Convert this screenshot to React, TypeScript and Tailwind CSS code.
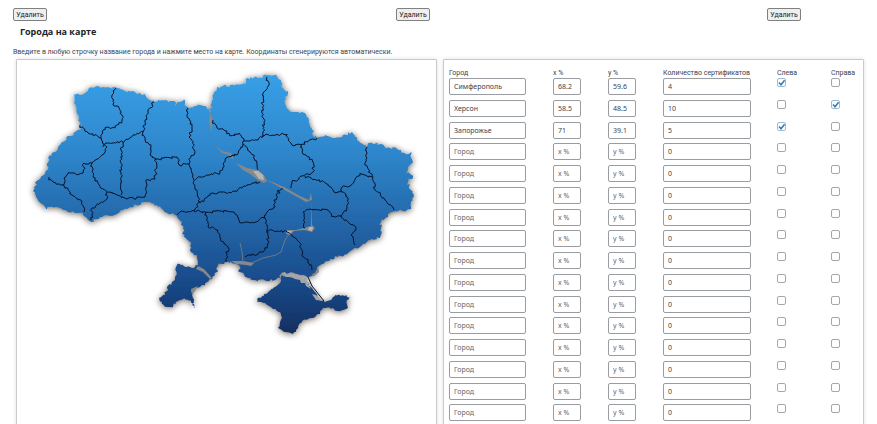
import React from "react";

type Point = [number, number];

const parse = (s: string): Point[] =>
  s
    .trim()
    .split(/\s+/)
    .map((p) => p.split(",").map(Number) as Point);

/* Adds small irregular steps to a coarse line so that borders and coasts look natural. */
function rough(source: string, amount: number, closed = false): string {
  const pts = parse(source);
  if (closed) pts.push(pts[0]);
  let seed = 7;
  const rand = () => {
    seed = (seed * 16807) % 2147483647;
    return seed / 2147483647 - 0.5;
  };
  const out: Point[] = [pts[0]];
  for (let i = 1; i < pts.length; i++) {
    const [x0, y0] = pts[i - 1];
    const [x1, y1] = pts[i];
    const steps = Math.max(1, Math.round(Math.hypot(x1 - x0, y1 - y0) / 2));
    for (let k = 1; k < steps; k++) {
      const t = k / steps;
      out.push([
        x0 + (x1 - x0) * t + rand() * amount,
        y0 + (y1 - y0) * t + rand() * amount,
      ]);
    }
    out.push([x1, y1]);
  }
  const d = out.map(([x, y]) => `${x.toFixed(1)},${y.toFixed(1)}`).join("L");
  return `M${d}${closed ? "Z" : ""}`;
}

const MAINLAND =
  "74,93 77,94 80,95 85,93 89,88 95,87 107,87 117,88 125,91 135,92 137,94 144,94 147,98 150,100 155,102 158,100 165,100 168,102 175,101 176,106 180,102 185,100 186,106 193,108 197,106 205,106 207,109 211,112 212,102 214,93 218,87 230,85 245,84 247,78 250,77 258,78 267,75 277,76 281,80 283,88 288,94 285,97 287,109 293,112 305,113 309,120 312,130 314,137 325,135 333,138 343,135 352,132 357,140 366,147 369,143 380,144 387,148 397,149 405,154 411,152 413,162 408,167 406,173 413,176 413,178 407,178 409,187 414,195 411,209 392,212 388,217 381,222 380,238 372,239 363,244 355,248 348,253 338,257 330,259 322,264 317,268 316,273 312,276 307,277 297,274 282,273 280,278 267,281 253,280 246,277 243,273 238,271 241,269 239,265 232,263 225,262 218,265 217,272 212,279 202,285 192,290 193,298 194,308 191,302 187,299 178,301 170,307 162,304 159,298 165,295 167,288 175,280 176,267 180,264 187,267 195,267 198,265 197,257 190,249 190,242 182,235 184,237 182,222 177,216 167,213 157,205 148,202 137,205 127,209 117,214 100,217 91,222 83,213 75,213 63,210 53,207 47,209 38,200 33,191 38,180 45,173 48,170 48,158 60,145 70,136 81,128 78,115 74,103";

const CRIMEA =
  "282,275 280,283 268,292 257,299 257,302 265,303 273,309 280,312 282,318 278,328 285,332 293,334 298,328 302,321 310,318 320,314 323,308 333,308 338,311 348,308 347,300 351,297 342,295 335,295 332,299 325,302 318,299 315,292 312,288 309,286 308,282 305,282 302,279 297,279 293,277 288,277";

const REGION_BORDERS = [
  "116,88 112,95 113,105 117,106 122,115 122,120 115,128 108,127 102,132 101,138 103,144 107,147 102,155 92,163 84,163 83,173 68,174 64,178 64,186",
  "80,125 88,133 101,138",
  "49,177 53,182 64,186 72,195 82,202 84,212",
  "92,163 93,177 100,187 108,192 117,195 127,199 145,197 146,180 155,179 156,159",
  "107,192 107,199 92,208 91,220",
  "103,147 107,143 123,142 121,150 121,167 121,195",
  "123,143 133,135 143,132 145,120 148,112 154,102",
  "143,132 145,140 151,147 150,155 156,159 177,157 179,165 189,164",
  "188,108 187,115 192,127 189,137 193,142 194,155 189,159 189,164 193,175 193,183 200,202 194,211",
  "195,179 207,175 220,173 225,160 232,155 237,155 243,144",
  "213,120 217,128 223,129 230,136 239,133 244,141 243,144 250,152 257,163 258,170",
  "267,77 269,85 263,93 262,113 264,122 263,135 258,140 244,141",
  "263,135 278,135 287,134 288,140 293,146 302,144 317,138",
  "260,182 253,183 247,185 232,192 213,193 200,203",
  "177,215 180,212 194,211 205,212 227,211 237,215 240,223 257,222 265,215 275,207 274,200 280,193 277,191 283,189",
  "206,212 208,227 218,230 220,240 228,247 226,262",
  "265,215 267,230 268,243 263,252 245,257",
  "267,230 287,232 292,235 300,243 302,255 312,267 312,270",
  "305,228 303,212 310,209 328,210 332,217 341,217 356,228 351,235 355,245",
  "302,144 302,152 313,162 313,172 305,175 292,182 291,188",
  "305,176 328,184 335,193 343,192 348,198 347,208 341,217",
  "342,191 342,187 350,186 360,173 373,178 375,190 385,200 394,210",
  "367,147 365,165 373,177",
];

const LAKES = [
  "M210,111 L213,120 L211,132 L209,120 Z",
  "M215,145 L222,151 L231,153 L234,159 L231,158 L229,155 L222,153 Z",
  "M236,163 L247,168 L258,170 L264,175 L267,181 L264,183 L258,180 L250,174 L243,170 Z",
  "M265,179 L284,187 L300,196 L309,200 L311,193 L312,200 L306,202 L299,198 L283,189 Z",
  "M311,200 L312,225 L315,228 L312,232 L304,230 L294,231 L290,235 L286,234 L287,230 L296,230 L304,228 L311,226 Z",
  "M231,261 L243,261 L254,263 L251,266 L246,265 L236,264 Z",
  "M318,266 L319,272 L314,276 L311,275 L316,272 Z",
  "M198,266 L204,269 L212,278 L210,279 L203,272 L196,269 Z",
  "M191,289 L198,286 L195,291 L192,295 Z",
];

const LAGOONS =
  "M281,273 L285,272 L287,275 L290,273 L293,276 L296,274 L298,277 L301,275 L302,279 L307,277 L307,281 L311,284 L308,284 L311,289 L306,286 L305,283 L301,283 L300,280 L295,279 L291,277 L286,277 Z M312,294 L316,295 L323,301 L316,300 Z";

function CountryMap() {
  return (
    <svg
      viewBox="0 0 419 289"
      className="block w-full"
      role="img"
      aria-label="Карта"
    >
      <defs>
        <linearGradient
          id="land"
          gradientUnits="userSpaceOnUse"
          x1="0"
          y1="76"
          x2="0"
          y2="333"
        >
          <stop offset="0" stopColor="#389fe6" />
          <stop offset="0.3" stopColor="#2e86cb" />
          <stop offset="0.6" stopColor="#2263a5" />
          <stop offset="0.8" stopColor="#194a8a" />
          <stop offset="1" stopColor="#112f60" />
        </linearGradient>
        <filter id="shade" x="-10%" y="-10%" width="120%" height="120%">
          <feDropShadow
            dx="0"
            dy="1"
            stdDeviation="3"
            floodColor="#2a1a10"
            floodOpacity="0.7"
          />
        </filter>
      </defs>
      <g transform="translate(-17 -60)">
        <g filter="url(#shade)" fill="url(#land)">
          <path d={rough(MAINLAND, 3, true)} />
          <path d={rough(CRIMEA, 2, true)} />
        </g>
        <g fill="#85898c">
          {LAKES.map((d) => (
            <path key={d} d={d} />
          ))}
        </g>
        <path d={LAGOONS} fill="#a3a5a8" />
        <g fill="#b5b5b5">
          <path d="M253,171 L258,171 L263,175 L264,180 L259,179 Z" />
          <path d="M309,227 L313,227 L312,231 L308,230 Z" />
          <path d="M287,231 L292,231 L290,234 L287,233 Z" />
        </g>
        <g fill="none" stroke="#70787f">
          <path d="M289,234 L285,240 L281,252 L276,255 L263,258 L252,263" />
          <path d="M243,262 L242,252 L240,243" />
        </g>
        <g
          fill="none"
          stroke="#06122a"
          strokeLinejoin="round"
        >
          {REGION_BORDERS.map((line) => (
            <path key={line} d={rough(line, 3)} />
          ))}
          <path d="M308,277 L312,286 L324,301" />
        </g>
      </g>
    </svg>
  );
}

type City = {
  name?: string;
  x?: string;
  y?: string;
  count?: string;
  left?: boolean;
  right?: boolean;
};

const CITIES: City[] = [
  { name: "Симферополь", x: "68.2", y: "59.6", count: "4", left: true },
  { name: "Херсон", x: "58.5", y: "48.5", count: "10", right: true },
  { name: "Запорожье", x: "71", y: "39.1", count: "5", left: true },
  ...Array.from({ length: 13 }, () => ({})),
];

function Field({
  label,
  value,
  placeholder,
  className,
}: {
  label: string;
  value?: string;
  placeholder?: string;
  className: string;
}) {
  return (
    <input
      type="text"
      aria-label={label}
      defaultValue={value}
      placeholder={placeholder}
      className={`block h-[17px] rounded-[2px] border border-[#999ca0] bg-white px-1 font-['Noto_Sans','Open_Sans',sans-serif] text-[7px] leading-[15px] text-[#3c434a] placeholder:text-[#646970] placeholder:opacity-100 ${className}`}
    />
  );
}

function Tick({ label, checked }: { label: string; checked?: boolean }) {
  return (
    <span className="relative block size-[9px]">
      <input
        type="checkbox"
        aria-label={label}
        defaultChecked={checked}
        className="peer block size-[9px] appearance-none rounded-[2px] border border-[#a4a7ab] bg-white checked:border-[#9cbcd6]"
      />
      <svg
        viewBox="0 0 9 9"
        className="pointer-events-none absolute inset-0 hidden size-[9px] peer-checked:block"
        aria-hidden="true"
      >
        <path
          d="M2 4.6 L4 6.8 L7.6 2.2"
          fill="none"
          stroke="#2f78b7"
          strokeWidth="1.5"
        />
      </svg>
    </span>
  );
}

function DeleteButton() {
  return (
    <button
      type="button"
      className="flex h-[13px] w-[34px] items-center justify-center rounded-[2px] border border-[#808080] bg-[#efefef] pt-px text-[7px] leading-none text-[#1a1a1a]"
    >
      Удалить
    </button>
  );
}

const PANEL =
  "min-w-0 rounded-[1px] border border-[#c9cacc] bg-white shadow-[0_0_4px_rgba(0,0,0,0.12)]";

export default function App() {
  return (
    <main className="flex h-screen flex-col overflow-hidden bg-white pt-2 font-[Roboto,'Noto_Sans',sans-serif] text-[7px] leading-[9px] text-[#3c434a]">
      <div className="grid shrink-0 grid-cols-[383fr_371fr_110fr] pl-[13px]">
        <DeleteButton />
        <DeleteButton />
        <DeleteButton />
      </div>
      <h1 className="mt-1 pl-5 font-['Open_Sans','Noto_Sans',sans-serif] text-[9px] leading-[14px] font-bold text-[#1d2327]">
        Города на карте
      </h1>
      <p className="mt-[9px] mb-0.5 pl-[13px]">
        Введите в любую строчку название города и нажмите место на карте.
        Координаты сгенерируются автоматически.
      </p>
      <div className="grid min-h-0 flex-1 grid-cols-2 gap-1.5 pr-[13px] pl-4">
        <section className={`${PANEL} -mb-4`}>
          <CountryMap />
        </section>
        <section className={`${PANEL} -mb-4 pt-[9px] pl-[5px]`}>
          <table className="h-[357px] w-full table-fixed border-collapse text-left">
            <colgroup>
              <col className="w-[104px]" />
              <col className="w-[55px]" />
              <col className="w-[55px]" />
              <col className="w-[114px]" />
              <col className="w-[54px]" />
              <col />
            </colgroup>
            <thead>
              <tr className="h-[9px] whitespace-nowrap">
                {[
                  "Город",
                  "x %",
                  "y %",
                  "Количество сертификатов",
                  "Слева",
                  "Справа",
                ].map((title) => (
                  <th key={title} scope="col" className="p-0 font-normal">
                    {title}
                  </th>
                ))}
              </tr>
            </thead>
            <tbody>
              {CITIES.map((city, i) => (
                <tr key={i} className="align-top">
                  <td className="p-0">
                    <Field
                      label={`Город ${i + 1}`}
                      value={city.name}
                      placeholder="Город"
                      className="w-[77px]"
                    />
                  </td>
                  <td className="p-0">
                    <Field
                      label={`x % ${i + 1}`}
                      value={city.x}
                      placeholder="x %"
                      className="w-7"
                    />
                  </td>
                  <td className="p-0">
                    <Field
                      label={`y % ${i + 1}`}
                      value={city.y}
                      placeholder="y %"
                      className="w-7"
                    />
                  </td>
                  <td className="p-0">
                    <Field
                      label={`Количество сертификатов ${i + 1}`}
                      value={city.count ?? "0"}
                      className="w-[88px]"
                    />
                  </td>
                  <td className="p-0">
                    <Tick label={`Слева ${i + 1}`} checked={city.left} />
                  </td>
                  <td className="p-0">
                    <Tick label={`Справа ${i + 1}`} checked={city.right} />
                  </td>
                </tr>
              ))}
            </tbody>
          </table>
        </section>
      </div>
    </main>
  );
}
